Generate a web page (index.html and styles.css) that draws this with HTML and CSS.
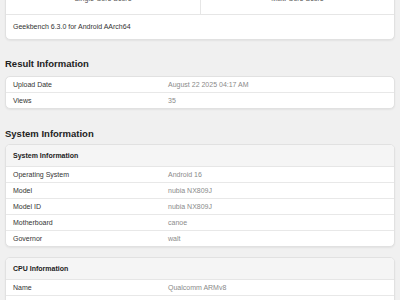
FILE: index.html
```html
<!DOCTYPE html>
<html>
<head>
  <title>Geekbench Result</title>
  <link rel="stylesheet" href="styles.css">
</head>
<body>
  <div class="page">
    <div class="card top-card">
      <div class="scores">
        <div class="score">
          <div class="score-num">2952</div>
          <div class="score-label">Single-Core Score</div>
        </div>
        <div class="score">
          <div class="score-num">9561</div>
          <div class="score-label">Multi-Core Score</div>
        </div>
      </div>
      <div class="version">Geekbench 6.3.0 for Android AArch64</div>
    </div>

    <h2>Result Information</h2>
    <div class="card">
      <div class="row"><span class="label">Upload Date</span><span class="value">August 22 2025 04:17 AM</span></div>
      <div class="row"><span class="label">Views</span><span class="value">35</span></div>
    </div>

    <h2 class="section-title">System Information</h2>
    <div class="card">
      <div class="card-head">System Information</div>
      <div class="row"><span class="label">Operating System</span><span class="value">Android 16</span></div>
      <div class="row"><span class="label">Model</span><span class="value">nubia NX809J</span></div>
      <div class="row"><span class="label">Model ID</span><span class="value">nubia NX809J</span></div>
      <div class="row"><span class="label">Motherboard</span><span class="value">canoe</span></div>
      <div class="row"><span class="label">Governor</span><span class="value">walt</span></div>
    </div>

    <div class="card spaced">
      <div class="card-head">CPU Information</div>
      <div class="row"><span class="label">Name</span><span class="value">Qualcomm ARMv8</span></div>
      <div class="row"><span class="label">Topology</span><span class="value">1 Processor, 8 Cores</span></div>
      <div class="row"><span class="label">Identifier</span><span class="value">ARM implementer 81 architecture 8</span></div>
    </div>
  </div>
</body>
</html>
```

FILE: styles.css
```css
body {
  margin: 0;
  background-color: #f0f0f0;
  font-family: "Liberation Sans", Arial, sans-serif;
  color: #333333;
}

.page {
  padding: 0 5px;
}

.card {
  background-color: #ffffff;
  border: 1px solid #e1e1e1;
  border-radius: 5px;
  box-shadow: 0 1px 2px rgba(0, 0, 0, 0.06);
  overflow: hidden;
}

.top-card {
  margin-top: -39px;
}

.scores {
  display: grid;
  grid-template-columns: 1fr 1fr;
  border-bottom: 1px solid #e6e6e6;
}

.score {
  text-align: center;
  padding: 8px 0 10px;
}

.score + .score {
  border-left: 1px solid #e6e6e6;
}

.score-num {
  font-size: 20px;
  line-height: 24px;
  font-weight: bold;
}

.score-label {
  font-size: 7px;
  line-height: 10px;
  color: #555555;
}

.version {
  padding: 0 7px;
  height: 24px;
  line-height: 24px;
  font-size: 7px;
  color: #333333;
}

h2 {
  margin: 18px 0 6px;
  font-size: 9.5px;
  line-height: 12px;
  font-weight: bold;
  color: #222222;
}

.section-title {
  margin-top: 19px;
  margin-bottom: 4px;
}

.card-head {
  height: 21px;
  line-height: 21px;
  padding: 0 7px;
  background-color: #f5f5f5;
  border-bottom: 1px solid #e6e6e6;
  font-size: 7px;
  font-weight: bold;
  color: #222222;
}

.row {
  display: flex;
  height: 15px;
  line-height: 15px;
  padding: 0 7px;
  font-size: 7px;
  border-bottom: 1px solid #e8e8e8;
}

.row:last-child {
  border-bottom: none;
}

.label {
  width: 155px;
  color: #333333;
}

.value {
  color: #8a8a8a;
}

.spaced {
  margin-top: 10px;
}
```
